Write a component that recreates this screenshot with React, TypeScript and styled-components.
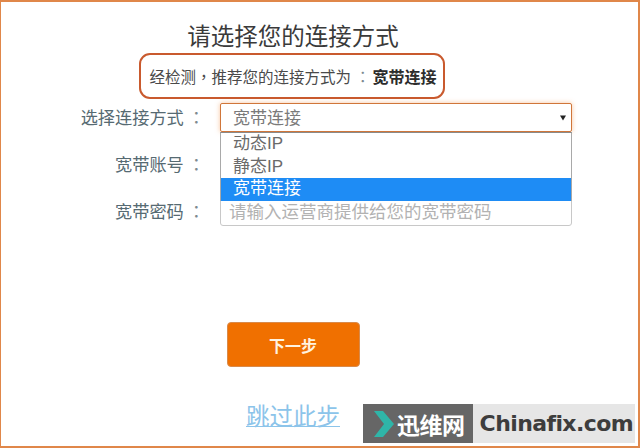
import React from "react";
import styled, { createGlobalStyle } from "styled-components";

const Global = createGlobalStyle`
  html, body { margin: 0; padding: 0; background: #fff; }
  body { font-family: "Liberation Sans", "Noto Sans CJK SC", sans-serif; }
`;

const Frame = styled.div`
  position: relative;
  box-sizing: border-box;
  width: 640px;
  height: 448px;
  overflow: hidden;
  background: #fff;
  border-style: solid;
  border-color: #e0874a;
  border-width: 2px 2px 2px 1px;
`;

const Column = styled.div`
  width: 584px;
  display: flex;
  flex-direction: column;
  align-items: center;
`;

const Title = styled.h1`
  margin: 19px 0 0;
  text-align: center;
  font-size: 23.5px;
  line-height: 32px;
  font-weight: 400;
  color: #3a3a3a;
`;

const Notice = styled.div`
  box-sizing: border-box;
  margin-right: 3px;
  width: 306px;
  height: 46px;
  border: 2px solid #c95a2e;
  border-radius: 11px;
  display: flex;
  align-items: center;
  padding-left: 9px;
  font-size: 15.5px;
  color: #4a4a4a;
  white-space: nowrap;
`;

const Punct = styled.span`
  font-family: "Noto Sans CJK TC", sans-serif;
`;

const Colon = styled(Punct)`
  padding-left: 4px;
  margin-right: -4px;
  color: #7d8a90;
`;

const Strong = styled.strong`
  margin-left: 6px;
  font-size: 16px;
  font-weight: 700;
  color: #2c2c2c;
`;

const Form = styled.div`
  margin-top: 4px;
  align-self: flex-start;
  width: 584px;
  display: flex;
  flex-direction: column;
  gap: 18px;
`;

const Row = styled.div`
  display: flex;
  align-items: center;
  height: 29px;
`;

const Label = styled.label`
  width: 200px;
  flex: none;
  text-align: right;
  font-size: 17.2px;
  line-height: 29px;
  color: #566a72;
  white-space: nowrap;
`;

const FieldWrap = styled.div`
  position: relative;
  margin-left: 19px;
  width: 352px;
  height: 29px;
`;

const SelectBox = styled.div`
  box-sizing: border-box;
  width: 100%;
  height: 100%;
  border: 1px solid #d0763a;
  border-radius: 2px;
  box-shadow: 0 0 5px rgba(240, 150, 80, 0.55);
  background: #fff;
  display: flex;
  align-items: center;
  justify-content: space-between;
  padding: 0 4px 2px 12px;
  font-size: 17px;
  color: #7a7a7a;
`;

const Arrow = styled.svg`
  width: 6px;
  height: 6px;
  margin: 3px 1px 0 0;
`;

const Input = styled.div`
  box-sizing: border-box;
  width: 100%;
  height: 100%;
  border: 1px solid #c8c8c8;
  border-radius: 3px;
  background: #fff;
  display: flex;
  align-items: flex-end;
  padding: 0 8px;
  font-size: 17.5px;
  line-height: 25px;
  color: #b2b2b2;
  white-space: nowrap;
`;

const Dropdown = styled.ul`
  position: absolute;
  z-index: 2;
  top: 29px;
  left: 0;
  box-sizing: border-box;
  width: 352px;
  margin: 0;
  padding: 0;
  list-style: none;
  background: #fff;
  border-left: 1px solid #a9a9a9;
  border-right: 1px solid #a9a9a9;
  border-top: 1px solid #8a8a8a;
`;

const Option = styled.li<{ $active?: boolean }>`
  height: ${(p) => (p.$active ? 23 : 22.5)}px;
  line-height: 21px;
  padding-left: 12px;
  font-size: 17px;
  color: ${(p) => (p.$active ? "#fff" : "#6a6a6a")};
  background: ${(p) => (p.$active ? "#1e8cf5" : "#fff")};
`;

const NextButton = styled.button`
  box-sizing: border-box;
  margin: 96px 0 0 0;
  width: 133px;
  height: 45px;
  border: 1px solid #d98a4a;
  border-radius: 4px;
  background: #f07000;
  color: #fff3e0;
  font-family: inherit;
  font-size: 16px;
  font-weight: 700;
`;

const SkipLink = styled.a`
  margin: 34px 0 0 0;
  font-size: 23.5px;
  line-height: 32px;
  color: #8cc4ea;
  text-decoration: underline;
  text-underline-offset: 1px;
  text-decoration-thickness: 1px;
`;

const Watermark = styled.div`
  position: absolute;
  left: 362px;
  top: 402px;
  display: flex;
  height: 39px;
`;

const MarkDark = styled.div`
  width: 110px;
  background: #666666;
  display: flex;
  align-items: center;
  gap: 3px;
  padding-left: 11px;
  box-sizing: border-box;
  color: #fff;
  font-size: 23px;
  font-weight: 700;
  letter-spacing: -0.5px;
`;

const MarkLight = styled.div`
  width: 162px;
  background: #e6e6e6;
  display: flex;
  align-items: center;
  justify-content: flex-end;
  padding-right: 2px;
  box-sizing: border-box;
  color: #3d3d3d;
  font-family: "DejaVu Sans", sans-serif;
  font-size: 22px;
  font-weight: 700;
  letter-spacing: -0.6px;
`;

export default function App() {
  return (
    <Frame>
      <Global />
      <Column>
        <Title>请选择您的连接方式</Title>
        <Notice>
          经检测<Punct>，</Punct>推荐您的连接方式为<Colon>：</Colon>
          <Strong>宽带连接</Strong>
        </Notice>
        <Form>
          <Row>
            <Label>选择连接方式<Colon>：</Colon></Label>
            <FieldWrap>
              <SelectBox>
                <span>宽带连接</span>
                <Arrow viewBox="0 0 6 6">
                  <path d="M0 0.5H6L3 5.5Z" fill="#222" />
                </Arrow>
              </SelectBox>
              <Dropdown>
                <Option>动态IP</Option>
                <Option>静态IP</Option>
                <Option $active>宽带连接</Option>
              </Dropdown>
            </FieldWrap>
          </Row>
          <Row>
            <Label>宽带账号<Colon>：</Colon></Label>
            <FieldWrap>
              <Input />
            </FieldWrap>
          </Row>
          <Row>
            <Label>宽带密码<Colon>：</Colon></Label>
            <FieldWrap>
              <Input>请输入运营商提供给您的宽带密码</Input>
            </FieldWrap>
          </Row>
        </Form>
        <NextButton>下一步</NextButton>
        <SkipLink href="#">跳过此步</SkipLink>
      </Column>
      <Watermark>
        <MarkDark>
          <svg width="20" height="26" viewBox="0 0 20 26">
            <path d="M0 0H9L20 13L9 26H0L10 13Z" fill="#2fb5a8" />
          </svg>
          <span>迅维网</span>
        </MarkDark>
        <MarkLight>Chinafix.com</MarkLight>
      </Watermark>
    </Frame>
  );
}
